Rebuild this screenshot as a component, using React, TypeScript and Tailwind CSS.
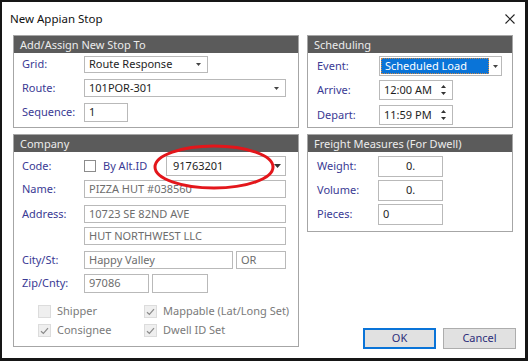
import React from "react";

const F = "font-['Noto_Sans',sans-serif]";

function Group({ title, className = "", children }: { title: string; className?: string; children?: React.ReactNode }) {
  return (
    <div className={`border border-[#a6a6a6] bg-white flex flex-col ${className}`}>
      <div className="h-[17px] bg-[#5b5b5b] text-[#ececec] text-[11px] leading-[17px] pl-[6px] whitespace-nowrap">{title}</div>
      {children}
    </div>
  );
}

function Label({ children, w = "w-[62px]" }: { children: React.ReactNode; w?: string }) {
  return <span className={`${w} shrink-0 text-[#3a3a94] text-[11px] whitespace-nowrap`}>{children}</span>;
}

function Box({ w, h, children, gray = false, center = false, className = "" }: { w: string; h: string; children?: React.ReactNode; gray?: boolean; center?: boolean; className?: string }) {
  return (
    <div
      className={`${w} ${h} border border-[#b9b9b9] bg-white flex items-center whitespace-nowrap ${center ? "justify-center" : "pl-[4px]"} text-[11px] ${gray ? "text-[#6d6d6d]" : "text-[#1e1e1e]"} ${className}`}
    >
      {children}
    </div>
  );
}

function Arrow() {
  return (
    <svg width="7" height="4" viewBox="0 0 7 4" className="shrink-0">
      <path d="M0 0 L7 0 L3.5 4 Z" fill="#333" />
    </svg>
  );
}

function Combo({ w, h, text }: { w: string; h: string; text: string }) {
  return (
    <div className={`${w} ${h} border border-[#b9b9b9] bg-white flex items-center pl-[4px] pr-[6px] text-[11px] text-[#1e1e1e] whitespace-nowrap`}>
      <span className="flex-1">{text}</span>
      <svg width="5" height="3" viewBox="0 0 5 3">
        <path d="M0 0 L5 0 L2.5 3 Z" fill="#444" />
      </svg>
    </div>
  );
}

function Spin({ text }: { text: string }) {
  return (
    <div className="w-[74px] h-[20px] border border-[#b9b9b9] bg-white flex items-center pl-[4px] pr-[6px] text-[11px] text-[#1e1e1e] whitespace-nowrap">
      <span className="flex-1">{text}</span>
      <svg width="5" height="12" viewBox="0 0 5 12">
        <path d="M0 4 L5 4 L2.5 1 Z" fill="#333" />
        <path d="M0 8 L5 8 L2.5 11 Z" fill="#333" />
      </svg>
    </div>
  );
}

function Check({ checked, label }: { checked: boolean; label: string }) {
  return (
    <div className="flex items-center h-[13px] whitespace-nowrap">
      <div className="w-[13px] h-[13px] shrink-0 border border-[#dcdcdc] bg-[#efefef] flex items-center justify-center">
        {checked && (
          <svg width="9" height="8" viewBox="0 0 9 8">
            <path d="M1 4.2 L3.4 6.5 L8 1.2" stroke="#8a8a8a" strokeWidth="1.2" fill="none" />
          </svg>
        )}
      </div>
      <span className="ml-[6px] text-[11px] text-[#7a7a7a]">{label}</span>
    </div>
  );
}

export default function App() {
  return (
    <div className={`${F} w-[528px] h-[361px] bg-white border-l-2 border-t-2 border-r-[3px] border-b-[3px] border-[#161616] relative overflow-hidden`}>
      <div className="h-[33px] flex items-center justify-between pl-[8px] pr-[10px]">
        <span className="text-[11.5px] text-[#111]">New Appian Stop</span>
        <svg width="10" height="10" viewBox="0 0 10 10">
          <path d="M0.5 0.5 L9.5 9.5 M9.5 0.5 L0.5 9.5" stroke="#222" strokeWidth="1.1" />
        </svg>
      </div>
      <div className="flex pl-[11px] gap-[8px]">
        {/* Left column */}
        <div className="w-[286px] flex flex-col">
          <Group title="Add/Assign New Stop To" className="h-[93px]">
            <div className="flex items-center pl-[8px] mt-[3px]">
              <Label>Grid:</Label>
              <Combo w="w-[124px]" h="h-[17px]" text="Route Response" />
            </div>
            <div className="flex items-center pl-[8px] mt-[6px]">
              <Label>Route:</Label>
              <Combo w="w-[202px]" h="h-[18px]" text="101POR-301" />
            </div>
            <div className="flex items-center pl-[8px] mt-[6px]">
              <Label>Sequence:</Label>
              <Box w="w-[44px]" h="h-[19px]">1</Box>
            </div>
          </Group>
          <Group title="Company" className="h-[213px] mt-[6px]">
            <div className="flex items-center pl-[8px] mt-[4px] h-[20px]">
              <Label>Code:</Label>
              <div className="w-[12px] h-[12px] shrink-0 border border-[#8c8c8c] bg-white" />
              <span className="ml-[7px] w-[63px] text-[11px] text-[#3a3a94] whitespace-nowrap">By Alt.ID</span>
              <div className="w-[120px] h-[20px] border border-[#b9b9b9] bg-white flex items-center pl-[6px] pr-[4px] text-[11px] text-[#1e1e1e]">
                <span className="flex-1">91763201</span>
                <Arrow />
              </div>
            </div>
            <div className="flex items-center pl-[8px] mt-[4px]">
              <Label>Name:</Label>
              <Box w="w-[202px]" h="h-[18px]" gray>PIZZA HUT #038560</Box>
            </div>
            <div className="flex items-center pl-[8px] mt-[7px]">
              <Label>Address:</Label>
              <Box w="w-[202px]" h="h-[18px]" gray>10723 SE 82ND AVE</Box>
            </div>
            <div className="flex items-center pl-[8px] mt-[4px]">
              <Label> </Label>
              <Box w="w-[202px]" h="h-[18px]" gray>HUT NORTHWEST LLC</Box>
            </div>
            <div className="flex items-center pl-[8px] mt-[6px]">
              <Label>City/St:</Label>
              <Box w="w-[149px]" h="h-[18px]" gray>Happy Valley</Box>
              <Box w="w-[50px]" h="h-[18px]" gray className="ml-[3px]">OR</Box>
            </div>
            <div className="flex items-center pl-[8px] mt-[5px]">
              <Label>Zip/Cnty:</Label>
              <Box w="w-[65px]" h="h-[19px]" gray>97086</Box>
              <Box w="w-[56px]" h="h-[19px]" gray className="ml-[3px]" />
            </div>
            <div className="flex pl-[24px] mt-[12px]">
              <div className="w-[106px]"><Check checked={false} label="Shipper" /></div>
              <Check checked label="Mappable (Lat/Long Set)" />
            </div>
            <div className="flex pl-[24px] mt-[6px]">
              <div className="w-[106px]"><Check checked label="Consignee" /></div>
              <Check checked label="Dwell ID Set" />
            </div>
          </Group>
        </div>
        {/* Right column */}
        <div className="w-[206px] h-[314px] flex flex-col">
          <Group title="Scheduling" className="h-[93px]">
            <div className="flex items-center pl-[9px] mt-[3px]">
              <Label>Event:</Label>
              <div className="w-[123px] h-[20px] border border-[#b9b9b9] bg-white flex items-center">
                <div className="ml-[1px] h-[16px] w-[108px] bg-[#0a74d8] border border-dotted border-[#c9884a] text-white text-[11px] leading-[14px] pl-[3px] whitespace-nowrap">Scheduled Load</div>
                <div className="flex-1 flex justify-center">
                  <svg width="5" height="3" viewBox="0 0 5 3"><path d="M0 0 L5 0 L2.5 3 Z" fill="#444" /></svg>
                </div>
              </div>
            </div>
            <div className="flex items-center pl-[9px] mt-[4px]">
              <Label>Arrive:</Label>
              <Spin text="12:00 AM" />
            </div>
            <div className="flex items-center pl-[9px] mt-[5px]">
              <Label>Depart:</Label>
              <Spin text="11:59 PM" />
            </div>
          </Group>
          <Group title="Freight Measures (For Dwell)" className="h-[98px] mt-[6px]">
            <div className="flex items-center pl-[9px] mt-[4px]">
              <Label w="w-[61px]">Weight:</Label>
              <Box w="w-[65px]" h="h-[21px]" center>0.</Box>
            </div>
            <div className="flex items-center pl-[9px] mt-[3px]">
              <Label w="w-[61px]">Volume:</Label>
              <Box w="w-[65px]" h="h-[21px]" center>0.</Box>
            </div>
            <div className="flex items-center pl-[9px] mt-[3px]">
              <Label w="w-[61px]">Pieces:</Label>
              <Box w="w-[65px]" h="h-[21px]">0</Box>
            </div>
          </Group>
          <div className="mt-auto flex justify-end gap-[7px] mr-[-3px]">
            <button className="w-[73px] h-[21px] bg-[#e1e1e1] border-2 border-[#0a74d8] text-[11px] text-[#2d2d7a]">OK</button>
            <button className="w-[73px] h-[21px] bg-[#e1e1e1] border border-[#adadad] text-[11px] text-[#2d2d7a]">Cancel</button>
          </div>
        </div>
      </div>
      <svg className="absolute left-[150px] top-[141px] pointer-events-none" width="124" height="48" viewBox="0 0 124 48">
        <ellipse cx="62" cy="24" rx="59" ry="21" fill="none" stroke="#e3161b" strokeWidth="3" />
      </svg>
    </div>
  );
}
